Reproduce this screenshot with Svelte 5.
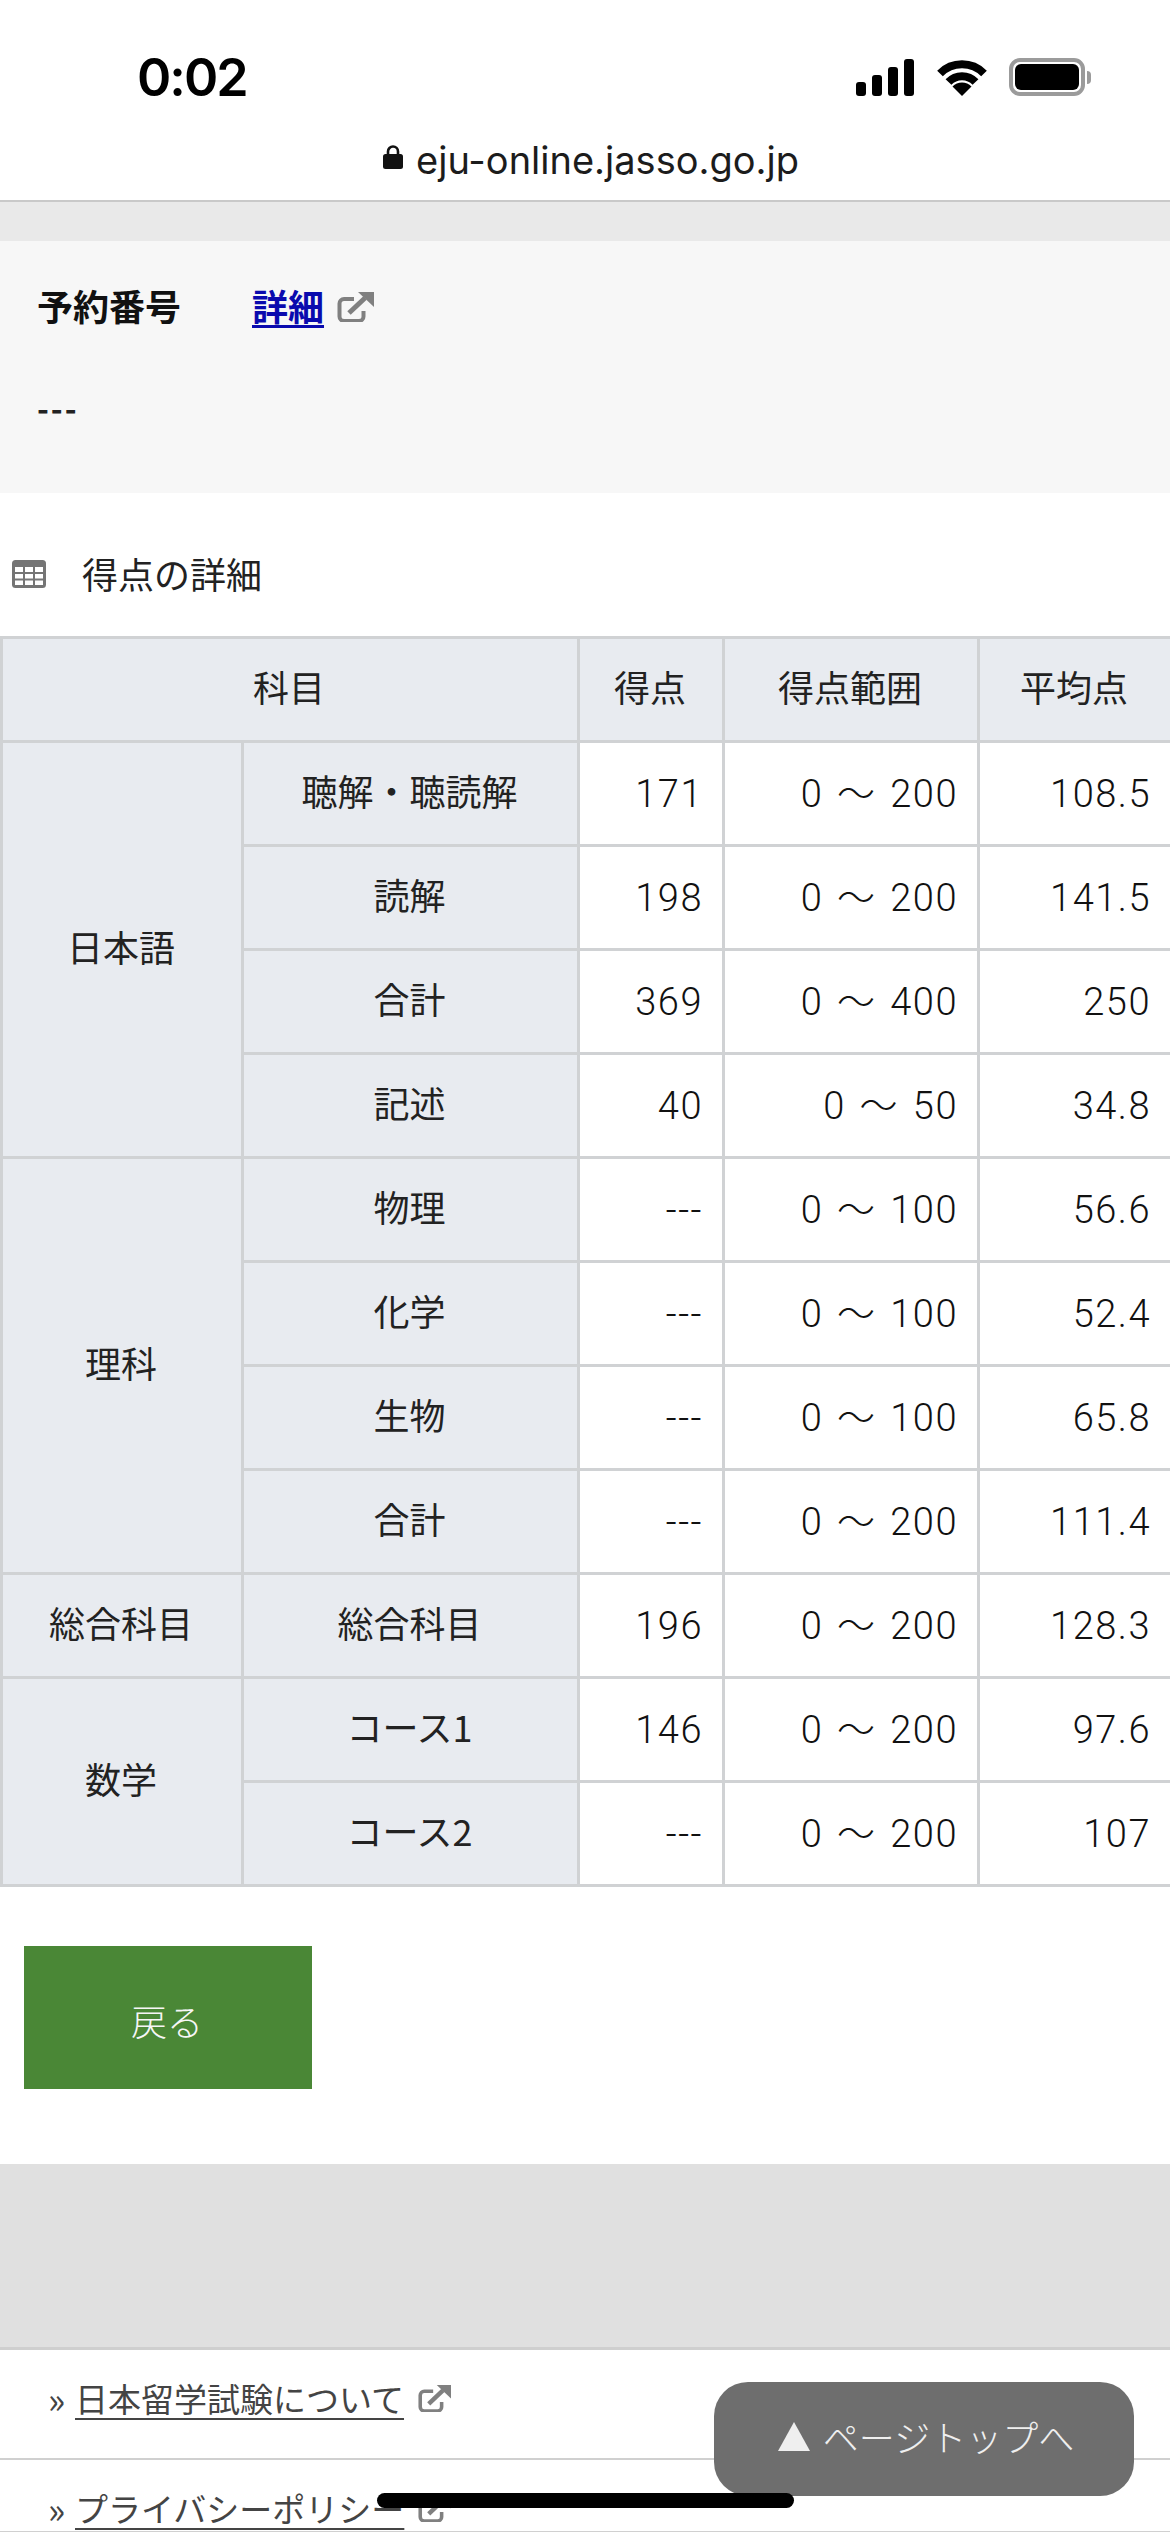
<script>
  const jp = [
    ['聴解・聴読解', '171', '0 ～ 200', '108.5'],
    ['読解', '198', '0 ～ 200', '141.5'],
    ['合計', '369', '0 ～ 400', '250'],
    ['記述', '40', '0 ～ 50', '34.8']
  ];
  const sci = [
    ['物理', '---', '0 ～ 100', '56.6'],
    ['化学', '---', '0 ～ 100', '52.4'],
    ['生物', '---', '0 ～ 100', '65.8'],
    ['合計', '---', '0 ～ 200', '111.4']
  ];
  const math = [
    ['コース1', '146', '0 ～ 200', '97.6'],
    ['コース2', '---', '0 ～ 200', '107']
  ];
  const groups = [
    { name: '日本語', rows: jp },
    { name: '理科', rows: sci },
    { name: '総合科目', rows: [['総合科目', '196', '0 ～ 200', '128.3']] },
    { name: '数学', rows: math }
  ];
</script>

{#snippet ext(cls)}
  <svg class={cls} viewBox="0 0 37 31" aria-hidden="true">
    <path d="M17 8H7a4.500 4.500 0 0 0-4.500 4.500v13A4.500 4.500 0 0 0 7 30h15a4.500 4.500 0 0 0 4.500-4.500V20" fill="none" stroke="#808080" stroke-width="4"/>
    <path d="M12 22 28 7" fill="none" stroke="#808080" stroke-width="5"/>
    <path d="M21 1H37V16Z" fill="#808080"/>
  </svg>
{/snippet}

<div class="page">
  <header class="status">
    <span class="time">0:02</span>
    <div class="icons">
      <div class="signal"><i class="b1"></i><i class="b2"></i><i class="b3"></i><i class="b4"></i></div>
      <svg class="wifi" viewBox="0 0 50 38" aria-hidden="true">
        <path d="M3 15.500A31 31 0 0 1 47 15.500" fill="none" stroke="#000" stroke-width="8"/>
        <path d="M11.500 24A18.500 18.500 0 0 1 38.500 24" fill="none" stroke="#000" stroke-width="8"/>
        <path d="M25 38 15.500 28.500A13.400 13.400 0 0 1 34.500 28.500Z" fill="#000"/>
      </svg>
      <div class="battery"><div class="shell"><div class="charge"></div></div><div class="nub"></div></div>
    </div>
  </header>
  <div class="url">
    <svg class="lock" viewBox="0 0 20 24" aria-hidden="true">
      <path d="M5 10V6.500a5 5 0 0 1 10 0V10" fill="none" stroke="#111" stroke-width="2.600"/>
      <rect x="0" y="9" width="20" height="15" rx="2.500" fill="#111"/>
    </svg>
    <span>eju-online.jasso.go.jp</span>
  </div>
  <div class="band"></div>

  <section class="reserve">
    <div class="reserve-head">
      <strong>予約番号</strong>
      <a href="#detail">詳細</a>
      {@render ext('ext-head')}
    </div>
    <div class="dash">---</div>
  </section>

  <h2 class="title">
    <svg class="tbl-icon" viewBox="0 0 34 28" aria-hidden="true">
      <rect width="34" height="28" rx="3.500" fill="#757575"/>
      <g fill="#fff">
        <rect x="3" y="7" width="8" height="5"/><rect x="13" y="7" width="8" height="5"/><rect x="23" y="7" width="8" height="5"/>
        <rect x="3" y="14" width="8" height="4.500"/><rect x="13" y="14" width="8" height="4.500"/><rect x="23" y="14" width="8" height="4.500"/>
        <rect x="3" y="20.500" width="8" height="4.500"/><rect x="13" y="20.500" width="8" height="4.500"/><rect x="23" y="20.500" width="8" height="4.500"/>
      </g>
    </svg>
    <span>得点の詳細</span>
  </h2>

  <table>
    <colgroup>
      <col class="c1" /><col class="c2" /><col class="c3" /><col class="c4" /><col class="c5" />
    </colgroup>
    <thead>
      <tr><th colspan="2">科目</th><th>得点</th><th>得点範囲</th><th>平均点</th></tr>
    </thead>
    <tbody>
      {#each groups as g}
        {#each g.rows as r, i}
          <tr>
            {#if i === 0}<th rowspan={g.rows.length}>{g.name}</th>{/if}
            <th>{r[0]}</th>
            <td>{r[1]}</td>
            <td>{r[2]}</td>
            <td>{r[3]}</td>
          </tr>
        {/each}
      {/each}
    </tbody>
  </table>

  <div class="actions"><button type="button">戻る</button></div>

  <div class="gray"></div>

  <footer>
    <div class="frow first">
      <span class="raquo">»</span><a href="#about">日本留学試験について</a>{@render ext('ext-foot')}
    </div>
    <div class="frow second">
      <span class="raquo">»</span><a href="#privacy">プライバシーポリシー</a>{@render ext('ext-foot')}
    </div>
  </footer>

  <div class="totop"><span class="tri"></span><span>ページトップへ</span></div>
  <div class="home"></div>
</div>

<style>
  :global(body) { margin: 0; background: #fff; }
  .page {
    position: relative;
    width: 1170px;
    height: 2532px;
    overflow: hidden;
    background: #fff;
    color: #222;
    font-family: "Noto Sans CJK JP", "Noto Sans", sans-serif;
    font-size: 36px;
  }
  .status {
    height: 130px;
    box-sizing: border-box;
    padding: 50px 79px 0 137px;
    display: flex;
    justify-content: space-between;
    align-items: flex-start;
  }
  .time {
    font-family: Inter, Roboto, sans-serif;
    font-weight: 600;
    font-size: 52px;
    line-height: 56px;
    color: #000;
    letter-spacing: -2px;
  }
  .icons { display: flex; align-items: flex-start; margin-top: 8px; }
  .signal { display: flex; align-items: flex-end; gap: 6px; height: 37px; width: 58px; margin-top: 1px; }
  .signal i { width: 10px; background: #000; border-radius: 3px; display: block; }
  .b1 { height: 14px; } .b2 { height: 21px; } .b3 { height: 29px; } .b4 { height: 37px; }
  .wifi { width: 50px; height: 38px; margin-left: 23px; }
  .battery { display: flex; align-items: center; margin-left: 22px; height: 38px; }
  .shell { width: 76px; height: 38px; box-sizing: border-box; border: 4px solid #9b9b9b; border-radius: 11px; padding: 2px; }
  .charge { width: 100%; height: 100%; background: #000; border-radius: 6px; }
  .nub { width: 4px; height: 13px; background: #9b9b9b; border-radius: 0 4px 4px 0; margin-left: 2px; }
  .url {
    height: 72px;
    box-sizing: border-box;
    border-bottom: 2px solid #c9c9c9;
    display: flex;
    justify-content: center;
    gap: 13px;
    padding: 7px 0 0 12px;
    font-family: Inter, Roboto, sans-serif;
    font-size: 38px;
    line-height: 46px;
    color: #1c1c1c;
  }
  .lock { width: 20px; height: 24px; margin-top: 8px; }
  .band { height: 39px; background: #e9e9e9; }
  .reserve { height: 252px; background: #f7f7f7; box-sizing: border-box; padding: 37px 37px 0; }
  .reserve-head { display: flex; align-items: flex-start; height: 54px; line-height: 54px; }
  .reserve-head strong { font-weight: 700; color: #111; width: 215px; }
  .reserve-head a { color: #0a0aae; font-weight: 700; text-underline-offset: 4px; }
  .ext-head { width: 37px; height: 31px; margin: 13px 0 0 13px; }
  .dash { margin-top: 48px; line-height: 54px; color: #222; font-size: 32px; font-weight: 700; letter-spacing: 2px; }
  .title {
    margin: 0;
    height: 143px;
    box-sizing: border-box;
    padding: 53px 0 0 12px;
    display: flex;
    align-items: flex-start;
    font-size: 36px;
    font-weight: 400;
    line-height: 54px;
    color: #222;
  }
  .tbl-icon { width: 34px; height: 28px; margin: 14px 36px 0 0; }
  table { width: 1170px; table-layout: fixed; border-collapse: collapse; border: 3px solid #d0d2d4; }
  .c1 { width: 241px; } .c2 { width: 336px; } .c3 { width: 145px; } .c4 { width: 255px; } .c5 { width: 193px; }
  tr { height: 104px; }
  th, td { border: 3px solid #d0d2d4; padding: 0 0 7px; font-size: 36px; line-height: 54px; box-sizing: border-box; }
  th { background: #e8ebf0; font-weight: 400; text-align: center; color: #222; padding-right: 2px; }
  td {
    background: #fff;
    text-align: right;
    padding: 1px 19px 0 0;
    font-family: Roboto, "Noto Sans CJK JP", sans-serif;
    font-size: 38px;
    font-weight: 300;
    letter-spacing: 1.5px;
    word-spacing: 3px;
    color: #111;
  }
  .actions { padding: 59px 0 0 24px; height: 277px; box-sizing: border-box; }
  button {
    display: block;
    width: 288px;
    height: 143px;
    box-sizing: border-box;
    background: #4a8736;
    color: #f6f6f6;
    border: 0;
    padding: 4px 2px 0 0;
    font-family: inherit;
    font-size: 36px;
    font-weight: 300;
  }
  .gray { height: 186px; box-sizing: border-box; background: #e0e0e0; border-bottom: 3px solid #cfcfcf; }
  .frow {
    box-sizing: border-box;
    display: flex;
    align-items: flex-start;
    padding: 26px 0 0 48px;
    border-bottom: 2px solid #d0d0d0;
    font-size: 33px;
    line-height: 44px;
    color: #444;
  }
  .first { height: 110px; }
  .second { height: 73px; }
  .raquo { width: 27px; font-size: 36px; color: #444; }
  .frow a { color: #444; text-underline-offset: 6px; text-decoration-thickness: 2px; }
  .ext-foot { width: 33px; height: 28px; margin: 8px 0 0 14px; }
  .totop {
    position: absolute;
    left: 714px;
    top: 2382px;
    width: 420px;
    height: 114px;
    background: #6e6e6e;
    border-radius: 34px;
    display: flex;
    align-items: center;
    justify-content: center;
    gap: 13px;
    color: #efefef;
    font-size: 36px;
    font-weight: 300;
    padding: 0 0 6px 4px;
    box-sizing: border-box;
  }
  .tri {
    width: 0;
    height: 0;
    border-left: 16px solid transparent;
    border-right: 16px solid transparent;
    border-bottom: 29px solid #efefef;
  }
  .home {
    position: absolute;
    left: 377px;
    top: 2493px;
    width: 417px;
    height: 15px;
    background: #000;
    border-radius: 8px;
  }
</style>
